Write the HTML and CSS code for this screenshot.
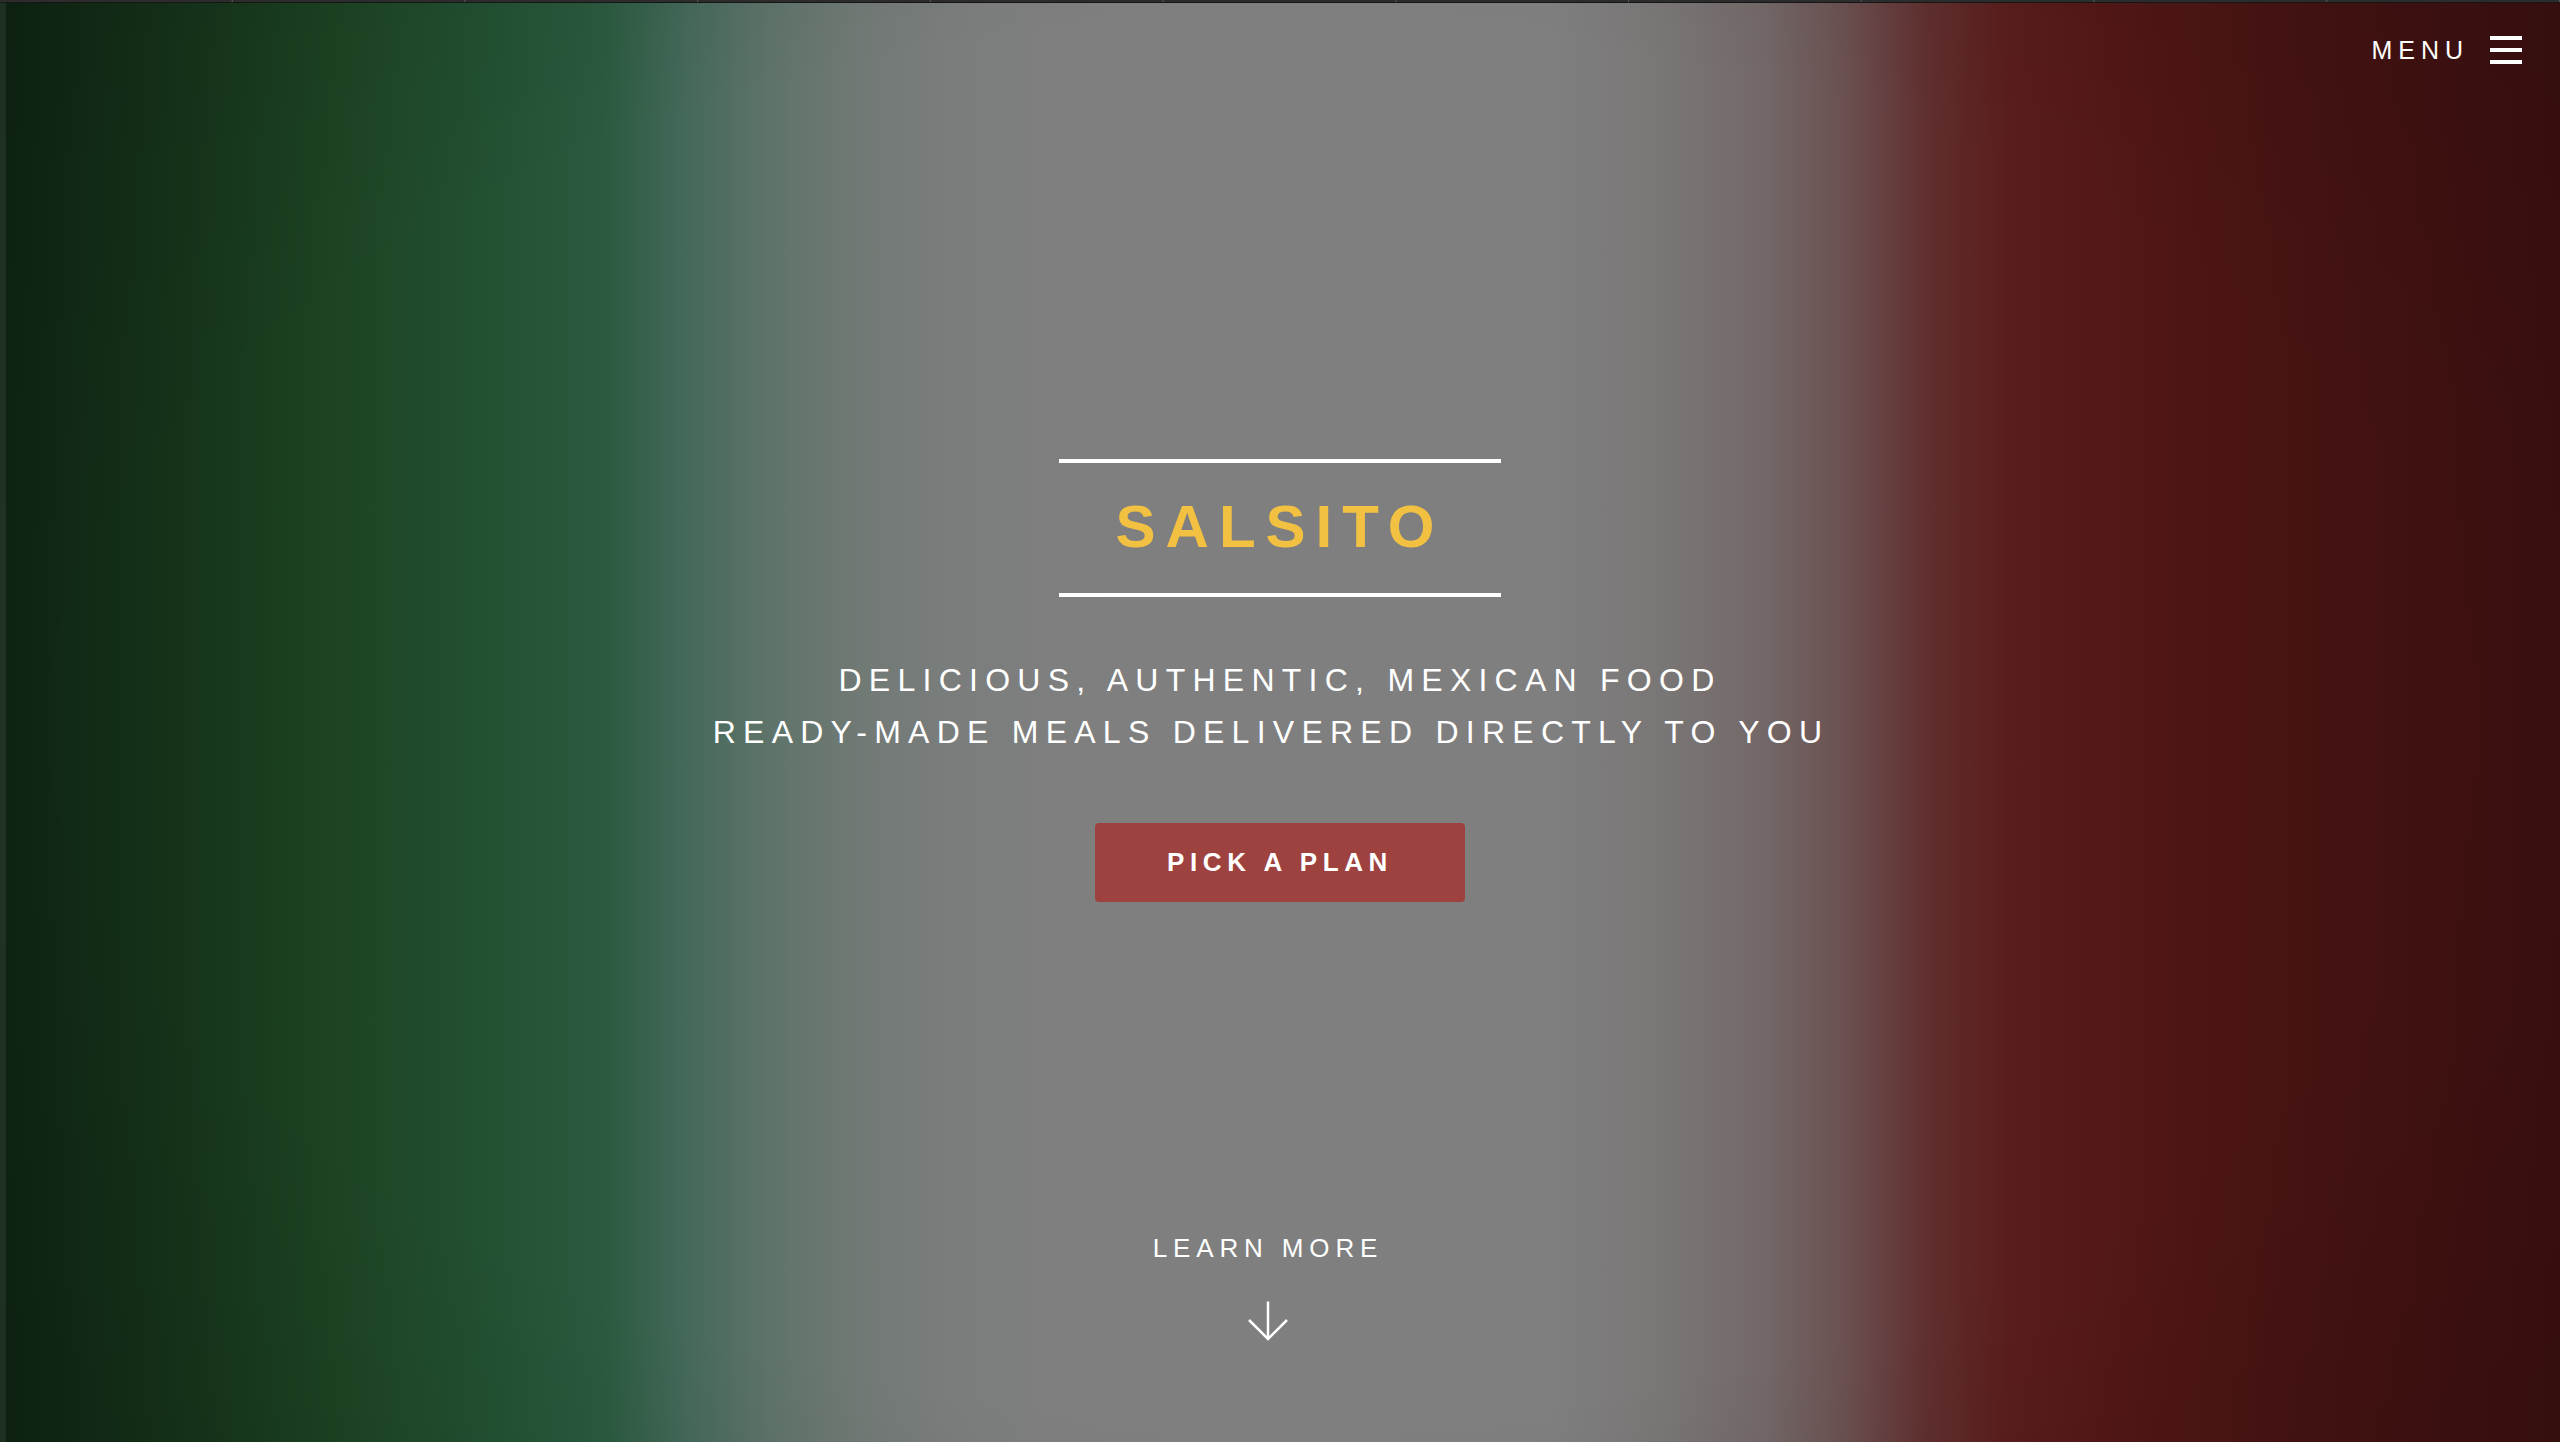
FILE: index.html
```html
<!DOCTYPE html>
<html lang="en">
<head>
<meta charset="utf-8">
<title>Salsito</title>
<link rel="stylesheet" href="styles.css">
</head>
<body>
<div class="page">
  <div class="topbar"></div>
  <header class="header">
    <a class="menu" href="#">
      <span class="menu-label">MENU</span>
      <span class="burger"><span></span><span></span><span></span></span>
    </a>
  </header>
  <main class="hero">
    <h1 class="title">SALSITO</h1>
    <p class="subtitle">
      <span class="subline">DELICIOUS, AUTHENTIC, MEXICAN FOOD</span>
      <span class="subline">READY-MADE MEALS DELIVERED DIRECTLY TO YOU</span>
    </p>
    <a class="cta" href="#">PICK A PLAN</a>
    <a class="learn" href="#">
      <span class="learn-label">LEARN MORE</span>
      <svg class="learn-arrow" width="40" height="40" viewBox="0 0 40 40" fill="none" stroke="#fff" stroke-width="2.5">
        <path d="M20 0.5 V38"/>
        <path d="M1 19 L20 38 L39 19"/>
      </svg>
    </a>
  </main>
</div>
</body>
</html>
```

FILE: styles.css
```css
* { box-sizing: border-box; }
html, body { margin: 0; padding: 0; }
body {
  font-family: "Liberation Sans", Arial, Helvetica, sans-serif;
  color: #fff;
  background: #111;
}
a { color: inherit; text-decoration: none; }

.page {
  height: 1442px;
  overflow: hidden;
  display: flex;
  flex-direction: column;
  background:
    linear-gradient(to right, rgba(255,255,255,0.07) 0, rgba(255,255,255,0.07) 6px, transparent 6px),
    radial-gradient(ellipse 75% 80% at 50% 50%, rgba(0,0,0,0) 60%, rgba(0,0,0,0.12) 100%),
    linear-gradient(to right,
      #0e2312 0%,
      #153219 6.4%,
      #1c4323 12.8%,
      #235132 19.1%,
      #2b5a3f 23.6%,
      #44695a 26.8%,
      #5e7369 30%,
      #727a76 33.8%,
      #7c7e7d 38.3%,
      #7f7f7f 43.4%,
      #7f7f7f 60.6%,
      #7a7676 65%,
      #736868 68.9%,
      #6b5050 72.1%,
      #612f2f 75.3%,
      #5a1d1d 78.4%,
      #551818 81.6%,
      #471313 89.3%,
      #3a0f0f 100%);
}

.topbar {
  height: 3px;
  flex: none;
  background-color: #2c2c2c;
  background-image: linear-gradient(to right, transparent calc(100% - 1px), #5a5a5a calc(100% - 1px));
  background-size: calc(100% / 11) 2px;
  background-repeat: repeat-x;
  border-bottom: 1px solid #161616;
}

.header {
  height: 94px;
  flex: none;
  display: flex;
  justify-content: flex-end;
  align-items: center;
  padding-right: 38px;
}
.menu {
  display: flex;
  align-items: center;
  gap: 21px;
}
.menu-label {
  font-size: 25px;
  letter-spacing: 6px;
  line-height: 28px;
}
.burger {
  display: flex;
  flex-direction: column;
  gap: 8px;
  width: 32px;
}
.burger span {
  display: block;
  height: 4px;
  background: #fff;
}

.hero {
  display: flex;
  flex-direction: column;
  align-items: center;
  padding-top: 362px;
}

.title {
  margin: 0;
  width: 442px;
  border-top: 4px solid #fff;
  border-bottom: 4px solid #fff;
  padding: 34px 0 36px;
  text-align: center;
  font-size: 60px;
  line-height: 60px;
  font-weight: 700;
  letter-spacing: 10px;
  color: #f2c142;
}

.subtitle {
  margin: 57px 0 0;
  display: flex;
  flex-direction: column;
  align-items: center;
  font-size: 32px;
  line-height: 52px;
  letter-spacing: 7.25px;
}
.subline:last-child { margin-right: 18px; }

.cta {
  margin-top: 65px;
  width: 370px;
  height: 79px;
  display: flex;
  align-items: center;
  justify-content: center;
  background: #9e4240;
  border-radius: 4px;
  font-size: 26px;
  font-weight: 700;
  letter-spacing: 5.6px;
}

.learn {
  margin-top: 331px;
  margin-right: 24px;
  display: flex;
  flex-direction: column;
  align-items: center;
}
.learn-label {
  font-size: 26px;
  line-height: 30px;
  letter-spacing: 5.85px;
}
.learn-arrow {
  display: block;
  margin-top: 38px;
}
```
